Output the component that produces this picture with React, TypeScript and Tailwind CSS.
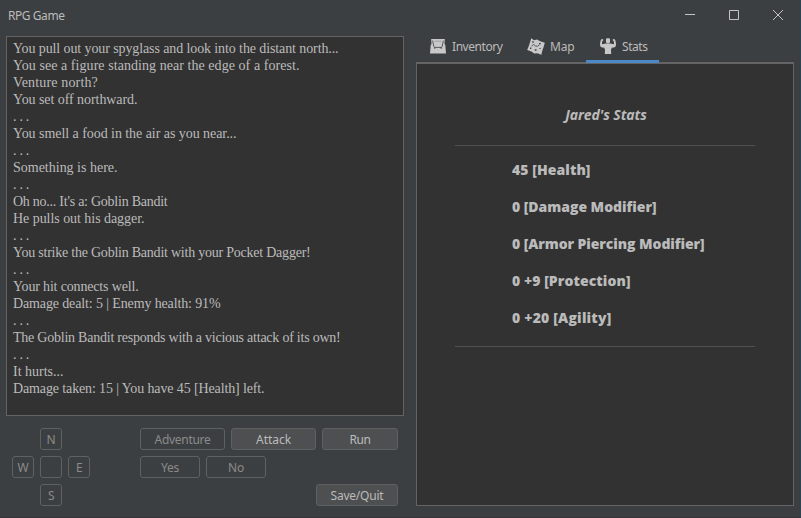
import { useLayoutEffect, useRef, useState } from "react";
import type { ReactNode } from "react";
import clsx from "clsx";

/** A single line of text, tracked so that it fills the given width. */
function Fit({ w, children, className }: { w: number; children: string; className?: string }) {
  const ref = useRef<HTMLSpanElement>(null);
  const [spacing, setSpacing] = useState(0);
  useLayoutEffect(() => {
    if (ref.current) {
      const natural = ref.current.getBoundingClientRect().width;
      setSpacing((w - natural) / children.length);
    }
  }, [w, children]);
  return (
    <span ref={ref} className={clsx("inline-block whitespace-pre", className)} style={{ letterSpacing: spacing }}>
      {children}
    </span>
  );
}

const log: [string, number][] = [
  ["You pull out your spyglass and look into the distant north...", 325.5],
  ["You see a figure standing near the edge of a forest.", 286.5],
  ["Venture north?", 85],
  ["You set off northward.", 124.5],
  [". . .", 16],
  ["You smell a food in the air as you near...", 223.5],
  [". . .", 16],
  ["Something is here.", 104.5],
  [". . .", 16],
  ["Oh no... It's a: Goblin Bandit", 154.5],
  ["He pulls out his dagger.", 131.5],
  [". . .", 16],
  ["You strike the Goblin Bandit with your Pocket Dagger!", 297.5],
  [". . .", 16],
  ["Your hit connects well.", 125.5],
  ["Damage dealt: 5 | Enemy health: 91%", 207.5],
  [". . .", 16],
  ["The Goblin Bandit responds with a vicious attack of its own!", 327.5],
  [". . .", 16],
  ["It hurts...", 50.5],
  ["Damage taken: 15 | You have 45 [Health] left.", 251.5],
];

const stats: [string, number][] = [
  ["45 [Health]", 78.5],
  ["0 [Damage Modifier]", 144.5],
  ["0 [Armor Piercing Modifier]", 192.5],
  ["0 +9 [Protection]", 118.5],
  ["0 +20 [Agility]", 99.5],
];

function Button({ label, w, className, enabled }: { label: string; w: number; className: string; enabled?: boolean }) {
  return (
    <button
      type="button"
      disabled={!enabled}
      className={clsx(
        "flex h-[22px] items-center justify-center rounded-[3px] border border-[#5e6162] pt-px text-[12px] leading-none",
        enabled ? "bg-[#4d4f50] text-[#bbbbbb]" : "text-[#8a8b8b]",
        className,
      )}
    >
      {label && <Fit w={w}>{label}</Fit>}
    </button>
  );
}

function BagIcon() {
  return (
    <svg width="16" height="15" viewBox="0 0 16 15" fill="none">
      <path d="M1.2 0h13.6l-.3 5 .8 1L16 14.5H0L.7 6l.8-1z" fill="#c8c8c8" />
      <path d="m2.6 1.6 1.3 6 .6.8h7l.6-.8 1.3-6" stroke="#3c3f41" strokeWidth=".8" />
      <path d="M4.6 2.2h6.8" stroke="#3c3f41" strokeOpacity=".5" strokeWidth=".6" />
      <path d="M4.8 8v2M11.2 8v2" stroke="#3c3f41" strokeWidth=".8" />
    </svg>
  );
}

function MapIcon() {
  return (
    <svg width="18" height="17" viewBox="0 0 18 17" fill="none">
      <path d="M4.3.2 7 2.2l3-.7 3.2 1.8 4.6 1.5-1.1 4-1.2 3.1-1.2 4.8-4-1.5-3.2.2-2.7-2L.2 12l1.6-4z" fill="#c8c8c8" />
      <path d="m4.5 8 2.2-1.5 2 1.6 1.8.1 2-1.3" stroke="#3c3f41" strokeWidth=".8" />
      <path d="M5.2 3.2h1.5v1.5H5.2zM12 4.9h1.7v1.4H12zM3 9.6h1.3V11H3zM7.8 11.2h1.7v1.5H7.8zM12.5 10h1.1v1.1h-1.1z" fill="#3c3f41" />
    </svg>
  );
}

function StrengthIcon() {
  return (
    <svg width="16" height="17" viewBox="0 0 16 17" fill="#c8c8c8">
      <path d="M6 .9 6.8.2h2.4l.8.7v3l-.8 1.3H6.8L6 3.9z" />
      <path d="M1 1.4 3 1l.4 1.3-1.1.8-.4 2.6.7.5 3-.6h4.8l3 .6.7-.5-.4-2.6-1.1-.8L13 1l2 .4.7 2.4.3 2.8-.5 2.1-1.7.9-2.1.2-.7 2.3.2 4H4.8l.2-4-.7-2.3-2.1-.2-1.7-.9L0 6.6l.3-2.8z" />
    </svg>
  );
}

function Tab({ icon, label, w, className }: { icon: ReactNode; label: string; w: number; className: string }) {
  return (
    <div className={clsx("flex h-[33px] items-center", className)}>
      {icon}
      <Fit w={w}>{label}</Fit>
    </div>
  );
}

export default function App() {
  return (
    <div className="flex h-[518px] w-[801px] flex-col overflow-hidden border-r border-b border-r-[#294552] border-b-[#3a3438] bg-[#3c3f41] font-['Noto_Sans','Open_Sans',sans-serif] text-[12px] text-[#bbbbbb]">
      <header className="flex h-[30px] shrink-0 items-center justify-between pr-[17px] pl-2">
        <Fit w={56.5} className="pt-0.5">RPG Game</Fit>
        <div className="flex items-center gap-[34px] text-[#c4c4c4]">
          <svg width="10" height="10" stroke="currentColor"><path d="M0 4.5h10" /></svg>
          <svg width="10" height="10" fill="none" stroke="currentColor"><path d="M.5.5h9v9h-9z" /></svg>
          <svg width="10" height="10" stroke="currentColor"><path d="m0 0 10 10M10 0 0 10" /></svg>
        </div>
      </header>

      <div className="flex flex-1 pl-1.5">
        <main className="flex w-[398px] flex-col pt-1.5">
          <div className="flex h-[380px] flex-col border border-[#646464] bg-[#323232] pt-[3px] pl-1.5 font-['Liberation_Serif',serif] text-[14px] leading-[17px]">
            {log.map(([line, w], i) => (
              <div key={i} className="h-[17px]">
                <Fit w={w}>{line}</Fit>
              </div>
            ))}
          </div>

          <div className="flex justify-between pt-3 pr-1.5 pl-1.5">
            <div className="grid grid-cols-3 gap-1.5">
              <Button label="N" w={9} className="col-start-2 w-[22px]" />
              <Button label="W" w={11} className="col-start-1 w-[22px]" />
              <Button label="" w={0} className="w-[22px]" />
              <Button label="E" w={6} className="w-[22px]" />
              <Button label="S" w={6} className="col-start-2 w-[22px]" />
            </div>
            <div className="flex w-[258px] flex-col gap-1.5">
              <div className="flex gap-1.5">
                <Button label="Adventure" w={56} className="w-[85px]" />
                <Button label="Attack" w={35} className="w-[85px]" enabled />
                <Button label="Run" w={21} className="w-[76px]" enabled />
              </div>
              <div className="flex gap-1.5">
                <Button label="Yes" w={18} className="w-[60px]" />
                <Button label="No" w={16} className="w-[60px]" />
              </div>
              <div className="flex justify-end">
                <Button label="Save/Quit" w={53} className="w-[82px]" enabled />
              </div>
            </div>
          </div>
        </main>

        <aside className="ml-3 flex w-[378px] flex-col">
          <nav className="flex h-8 shrink-0">
            <Tab icon={<BagIcon />} label="Inventory" w={50.5} className="w-[97px] gap-1.5 pl-3.5" />
            <Tab icon={<MapIcon />} label="Map" w={24.5} className="w-[73px] gap-[5px] pl-3.5" />
            <div className="relative">
              <Tab icon={<StrengthIcon />} label="Stats" w={25.5} className="w-[73px] gap-1.5 pl-3.5" />
              <div className="absolute top-[30px] left-0 h-[3px] w-full bg-[#4a88c7]" />
            </div>
          </nav>
          <section className="flex h-[444px] flex-col items-center border border-t-2 border-[#646464] bg-[#323232] font-['Open_Sans','Noto_Sans',sans-serif] text-[14px] leading-[18px] font-bold">
            <h1 className="mt-[42px] h-[39px] pl-0.5 italic">
              <Fit w={81.5}>Jared's Stats</Fit>
            </h1>
            <ul className="flex h-[202px] w-[300px] flex-col gap-[19px] border-y border-[#515151] pt-[15px] pl-[57px] font-extrabold">
              {stats.map(([line, w]) => (
                <li key={line} className="h-[18px]">
                  <Fit w={w}>{line}</Fit>
                </li>
              ))}
            </ul>
          </section>
        </aside>
      </div>
    </div>
  );
}
